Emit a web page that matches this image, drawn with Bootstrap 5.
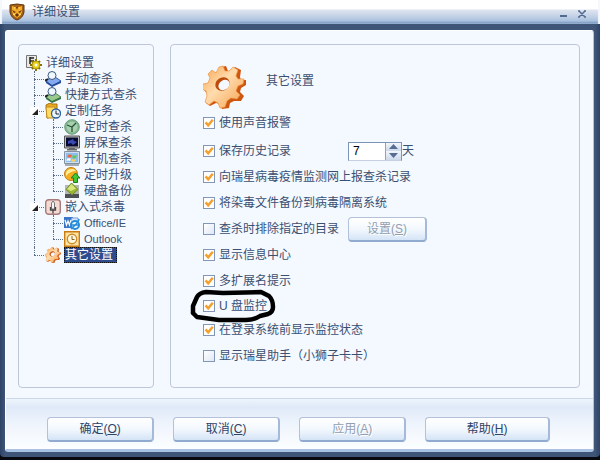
<!DOCTYPE html>
<html lang="zh-CN">
<head>
<meta charset="utf-8">
<meta name="viewport" content="width=device-width, initial-scale=1">
<title>详细设置</title>
<link href="https://cdn.jsdelivr.net/npm/bootstrap@5.3.0/dist/css/bootstrap.min.css" rel="stylesheet">
<style>
  body { font: 12px/16px "Liberation Sans", "Noto Sans CJK SC", sans-serif; color: #3b4f70; background: #08090f; }
  .app-window { height: calc(100vh - 3px); background: linear-gradient(90deg, #2d4468, #3f5577 5px, #3f5577 calc(100% - 5px), #2d4468); border-radius: 0 0 4px 4px; overflow: hidden; }
  .title-bar { height: 24px; margin-bottom: 6px; gap: 6px; padding: 0 14px 0 8px; background: linear-gradient(#fff 0 9px, #dde4ef 10px, #c9d6e8 15px, #a9c0de 21px, #7c98c3 23px); box-shadow: inset 2px 0 1px #f4f7fc, inset -2px 0 1px #f4f7fc; }
  .win-btns { gap: 11px; padding-top: 3px; }
  .win-btn { border: 0; background: none; padding: 0; line-height: 0; }
  .client-area { margin: 0 6px 5px 5px; background: #f4f8ff; border: 1px solid #fff; border-right-color: #a9c4e8; border-bottom: 3px solid #a9c1e2; border-radius: 3px; }
  .panes { padding: 13px 13px 10px 12px; gap: 16px; }
  .pane { border: 1px solid #bcc8da; border-radius: 4px; }
  .tree-pane { width: 136px; padding: 10px 0 0 7px; }
  .tree-pane ul { list-style: none; margin: 0; padding: 0 0 0 8px; }
  .tree-pane ul ul { margin-left: -11px; padding-left: 19px; }
  .tree-pane li li { position: relative; padding-left: 11px; }
  .tree-pane li li::before { content: ""; position: absolute; left: 0; top: 0; bottom: 0; border-left: 1px dotted #5b6d88; }
  .tree-pane li li:last-child::before { bottom: auto; height: 8px; }
  .tree-pane li li::after { content: ""; position: absolute; left: 0; top: 8px; width: 10px; border-top: 1px dotted #5b6d88; }
  .node { height: 16px; white-space: nowrap; }
  .node svg { width: 16px; height: 16px; flex: none; margin-right: 3px; }
  .node a { color: inherit; text-decoration: none; padding: 0 1px; line-height: 16px; height: 16px; }
  .node .chosen { background: #2d4b8d; color: #fff; outline: 1px dotted #111; outline-offset: -1px; padding-right: 4px; }
  .latin { font-size: 11px; }
  .twist { position: absolute; z-index: 1; left: -4px; top: 4px; width: 9px; height: 9px; border: 0; padding: 0; background: #fff; line-height: 0; }
  .twist svg { width: 6px; height: 6px; margin: 1px 2px; display: block; }
  .option-pane { padding: 20px 0 0 32px; }
  .heading { height: 45px; gap: 20px; }
  .heading h1 { font-size: 12px; font-weight: 400; line-height: 16px; margin: 8px 0 0; }
  .opt { height: 26px; }
  .opt-days { margin-top: 2px; }
  .opt-short { height: 23px; }
  .opt label { white-space: nowrap; }
  .opt .form-check-input { width: 12px; height: 12px; margin: 0 4px 0 0; flex: none; border: 1px solid #8296b8; border-radius: 0; background-color: #fff; background-image: linear-gradient(135deg, #fff, #dfe8f6); background-size: cover; }
  .opt .form-check-input:checked { background-color: #fff; border-color: #8296b8; background-size: 10px 10px; background-image: url("data:image/svg+xml,%3csvg xmlns='http://www.w3.org/2000/svg' viewBox='0 0 10 10'%3e%3cpath d='M1.6 4.4 4.2 7.3 8.8 1.8' fill='none' stroke='%23f2a02e' stroke-width='2.5'/%3e%3c/svg%3e"); }
  .days-box { width: 54px; height: 19px; border: 1px solid #7e94b6; border-bottom-color: #c5d0e0; background: #fff; }
  .days-box input { min-width: 0; width: 36px; border: 0; padding: 0 4px; font-size: 12px; color: #000; background: none; }
  .spin { border: 0; border-left: 1px solid #8fa2c0; width: 16px; height: 50%; padding: 0; line-height: 0; background: linear-gradient(#f2f6fc, #ccd8ea); }
  .btn-app { height: 25px; padding: 0; font-size: 12px; line-height: 16px; color: #2f4364; border: 1px solid #b3c2d8; border-right: 2px solid #a4bad8; border-bottom: 2px solid #90abcf; border-radius: 4px; background: linear-gradient(#fff, #f3f8fe 50%, #d5e4f6); }
  .btn-app:disabled { color: #929fb2; opacity: 1; border-color: #b3c2d8 #a4bad8 #90abcf #b3c2d8; background: linear-gradient(#fff, #f3f8fe 50%, #d5e4f6); text-shadow: 1px 1px #fff; }
  .col-directory { width: 145px; }
  .btn-path { width: 79px; }
  .footer-bar { padding: 18px 43px 7px 41px; gap: 19px; border-top: 1px solid #ccd9eb; background: linear-gradient(#eef4fc, #dfe9f8 8px, #eef4fc 24px, #fbfdff 48px); }
  .footer-bar .btn-app { flex: 107 1 0; }
  .footer-bar .btn-wide { flex-grow: 125; }
  .ring { position: absolute; left: -14px; top: -6px; width: 88px; height: 36px; pointer-events: none; }
</style>
<script src="https://cdn.jsdelivr.net/npm/bootstrap@5.3.0/dist/js/bootstrap.bundle.min.js"></script>
</head>
<body>
<div class="app-window d-flex flex-column">
  <header class="title-bar d-flex align-items-center flex-shrink-0">
    <svg width="18" height="18" viewBox="0 0 18 18"><path d="M2 2q7-2 14 0v7q-1 6-7 8-6-2-7-8z" fill="#a85f13" stroke="#5d3a16"/><path d="M4 3l3 1h4l3-1v6l-2 4-3 2-3-2-2-4z" fill="#f4ad27"/><path d="M4 7l4 2-2 1zM14 7l-4 2 2 1zM7 12l2-2 2 2-2 2zM8 4h2l-1 3z" fill="#653112"/><path d="M6 5h1M11 5h1M5 11l2 1M13 11l-2 1" stroke="#fff08a"/></svg>
    <span>详细设置</span>
    <div class="win-btns d-flex align-items-end ms-auto">
      <button class="win-btn" aria-label="最小化"><svg width="7" height="8"><path d="M0 5h7v2H0z" fill="#536b91"/></svg></button>
      <button class="win-btn" aria-label="关闭"><svg width="8" height="8" viewBox="0 0 8 8"><path d="M1 1l6 6M7 1L1 7M0 1h2M6 1h2M0 7h2M6 7h2" fill="none" stroke="#536b91" stroke-width="1.5"/></svg></button>
    </div>
  </header>

  <main class="client-area d-flex flex-column flex-grow-1">
    <div class="panes d-flex flex-grow-1">
      <nav class="pane tree-pane flex-shrink-0" aria-label="设置分类">
        <ul class="p-0">
          <li>
            <div class="node d-flex"><svg viewBox="0 0 16 16"><path d="M.5.5h10v12H.5z" fill="#e8e8e4" stroke="#777"/><path d="M4 2v7M4 3h4M4 6h4" stroke="#222" stroke-width="1.5"/><path d="M10 4v12M4 10h12M6 6l8 8M14 6l-8 8" stroke="#8a7200" stroke-width="2"/><circle cx="10" cy="10" r="4" fill="#e4d11b" stroke="#8a7200" stroke-width=".6"/><circle cx="10" cy="10" r="1.5" fill="#fff"/></svg><a href="#">详细设置</a></div>
            <ul>
              <li><div class="node d-flex"><svg viewBox="0 0 16 16"><path d="M0 9l10-3 6 4-9 5z" fill="#85aaf0" stroke="#3159ae"/><path d="M1 10l6 4 9-4v2l-9 4-6-4z" fill="#254c9b"/><path d="M3 8l-3 2" stroke="#222" stroke-width="2"/><circle cx="7" cy="4.5" r="4" fill="#eef7ff" stroke="#3b5878"/></svg><a href="#">手动查杀</a></div></li>
              <li><div class="node d-flex"><svg viewBox="0 0 16 16"><path d="M0 9l10-3 6 4-9 5z" fill="#9bc98b" stroke="#4b8754"/><path d="M1 10l6 4 9-4v2l-9 4-6-4z" fill="#397545"/><path d="M3 8l-3 2" stroke="#222" stroke-width="2"/><circle cx="7" cy="4.5" r="4" fill="#eef7ff" stroke="#3b5878"/></svg><a href="#">快捷方式查杀</a></div></li>
              <li>
                <button class="twist" aria-label="折叠定制任务"><svg viewBox="0 0 5 5"><path d="M5 0v5H0z" fill="#222"/></svg></button>
                <div class="node d-flex"><svg viewBox="0 0 16 16"><path d="M1 2l4-2 2 1h5v12L2 15z" fill="#e9a81f" stroke="#a5700d"/><path d="M1 4h9v11H2z" fill="#ffdb66" stroke="#c18b20"/><circle cx="11" cy="10.5" r="4.5" fill="#eaf5ff" stroke="#2b62a1" stroke-width="1.3"/><path d="M11 7.500v3.500h3" fill="none" stroke="#222"/></svg><a href="#">定制任务</a></div>
                <ul>
                  <li><div class="node d-flex"><svg viewBox="0 0 16 16"><circle cx="8" cy="8" r="7.300" fill="#80b58e" stroke="#6d9f7c"/><circle cx="8" cy="8" r="5.500" fill="#a8d0ae"/><path d="M3 6l5 2 4-4M8 8v5" fill="none" stroke="#24543b" stroke-width="1.300"/></svg><a href="#">定时查杀</a></div></li>
                  <li><div class="node d-flex"><svg viewBox="0 0 16 16"><path d="M.5 1h15v12H.5z" fill="#bbb" stroke="#555"/><path d="M2 2.500h12v9H2z" fill="#080b32"/><path d="M4 6l3-1 2-1 1 2 3 1-4 3-2-2-3 1z" fill="#3c4bb4"/><path d="M5 13h6v1h2v1.500H3V14h2z" fill="#666"/></svg><a href="#">屏保查杀</a></div></li>
                  <li><div class="node d-flex"><svg viewBox="0 0 16 16"><path d="M.5.5h15v12H.5z" fill="#cde0f3" stroke="#82909f"/><path d="M2 2h12v9H2z" fill="#8fbdea"/><path d="M4 4q2-1 4 0L7 6.500Q5 6 3.500 6.500z" fill="#ef6540"/><path d="M9 4q2 1 4 0l-1 3q-2 1-4-.5z" fill="#69c457"/><path d="M3 7.500q2-.5 4 0L6 10q-2-1-3.500 0z" fill="#fff"/><path d="M8 8q2 1 4 0l-1 2.500q-2 .5-4-.5z" fill="#ffd35a"/><path d="M1 13h14v2H1z" fill="#a5aeb7"/></svg><a href="#">开机查杀</a></div></li>
                  <li><div class="node d-flex"><svg viewBox="0 0 16 16"><circle cx="7" cy="7" r="6.500" fill="#f5ae20" stroke="#c77b10"/><path d="M2 6q1-4 6-4 3 0 4 2-6 0-10 5z" fill="#fff0a0"/><path d="M11.500 6L16 11h-2.500v4.500h-4V11H7z" fill="#45c735" stroke="#167d1b"/></svg><a href="#">定时升级</a></div></li>
                  <li><div class="node d-flex"><svg viewBox="0 0 16 16"><path d="M1 2h14v13H1z" fill="#b4b8b7"/><path d="M1 11h14v4H1z" fill="#4d5157"/><path d="M7.500 0L14 6.500 8 12 2 6.500z" fill="#9ab532" stroke="#6f8c28"/><path d="M7.500 1L12 5.500 7 8 3 6z" fill="#d7e77c"/></svg><a href="#">硬盘备份</a></div></li>
                </ul>
              </li>
              <li>
                <button class="twist" aria-label="折叠嵌入式杀毒"><svg viewBox="0 0 5 5"><path d="M5 0v5H0z" fill="#222"/></svg></button>
                <div class="node d-flex"><svg viewBox="0 0 16 16"><rect x=".7" y=".7" width="14.600" height="14.600" rx="3" fill="#f5d9d3" stroke="#a67b79" stroke-width="1.400"/><path d="M8 2l1.500 2v6h-3V4z" fill="#f7f7f7" stroke="#777"/><path d="M5.500 8v3h5V8M8 11v3.500" fill="none" stroke="#444" stroke-width="1.300"/></svg><a href="#">嵌入式杀毒</a></div>
                <ul>
                  <li><div class="node d-flex"><svg viewBox="0 0 16 16"><path d="M0 2h9v11H0z" fill="#3c75c6"/><path d="M4 3h10v9H4z" fill="#d7e9fc" stroke="#719bcf"/><path d="M1.500 2v11h6V2z" fill="#3c75c6"/><path d="M1 5l1.500 5L4 6l1.500 4L7 5" fill="none" stroke="#fff" stroke-width="1.300"/><circle cx="11" cy="10" r="4" fill="#e9f8ff" stroke="#278bd8" stroke-width="2"/><path d="M8 10h6M7 14Q15 7 15 4" fill="none" stroke="#278bd8" stroke-width="1.500"/></svg><a class="latin" href="#">Office/IE</a></div></li>
                  <li><div class="node d-flex"><svg viewBox="0 0 16 16"><path d="M.7.7h14.600v14.600H.7z" fill="#ffe3a0" stroke="#c97b13" stroke-width="1.400"/><circle cx="8" cy="8" r="4.700" fill="#fff8df" stroke="#c98b2b" stroke-width="1.400"/><path d="M8 5v3.500h2.500" fill="none" stroke="#8d6120"/></svg><a class="latin" href="#">Outlook</a></div></li>
                </ul>
              </li>
              <li><div class="node d-flex"><svg viewBox="0 0 43 44"><use href="#cog"/></svg><a class="chosen" href="#" aria-current="page">其它设置</a></div></li>
            </ul>
          </li>
        </ul>
      </nav>

      <form class="pane option-pane flex-grow-1">
        <div class="heading d-flex align-items-start">
          <svg width="43" height="44" viewBox="0 0 43 44">
            <defs><linearGradient id="gold" x1="0" y1="0" x2="1" y2="1"><stop offset="0" stop-color="#f8a550"/><stop offset=".45" stop-color="#ffdcae"/><stop offset="1" stop-color="#f5a04c"/></linearGradient></defs>
            <g id="cog">
              <path id="cog-edge" d="M18 2l5-1 2 5h3l4-4 6 3-1 7 1 3 5 0v5l-5 3-1 4 4 4-3 5-7 0-4 2-1 5-7 1-2-5-4-1-6 3-4-3 3-6-2-4-3-3 1-5 5-1 3-5-3-4 4-3 4 2z" fill="#cf560f"/>
              <path d="M16 2l4-1 2 5h4l4-4 5 3-2 6 2 3 6 0-1 5-5 2-2 5 4 4-3 4-6-1-4 3-2 6-5 1-2-5-4-2-5 4-4-3 2-6-1-5-4-2 1-5 5-1 2-5-2-4 4-4 4 3z" fill="url(#gold)" stroke="#ee9440" stroke-width=".7"/>
              <ellipse cx="19.500" cy="19" rx="7.500" ry="6.500" transform="rotate(-35 19.500 19)" fill="#bd4b0b"/>
              <ellipse cx="21" cy="20" rx="6" ry="4.700" transform="rotate(-35 21 20)" fill="#f4f8ff"/>
            </g>
          </svg>
          <h1>其它设置</h1>
        </div>
        <div class="opt d-flex align-items-center"><input class="form-check-input" type="checkbox" id="c1" checked><label for="c1">使用声音报警</label></div>
        <div class="opt opt-days d-flex align-items-center">
          <div class="col-directory d-flex align-items-center flex-shrink-0"><input class="form-check-input" type="checkbox" id="c2" checked><label for="c2">保存历史记录</label></div>
          <div class="days-box d-flex flex-shrink-0"><input type="text" value="7" id="days" aria-label="保存天数">
            <div class="d-flex flex-column"><button type="button" class="spin" aria-label="增加"><svg width="9" height="5"><path d="M0 5l4.500-5L9 5z" fill="#556d93"/></svg></button><button type="button" class="spin" aria-label="减少"><svg width="9" height="5"><path d="M0 0l4.500 5L9 0z" fill="#556d93"/></svg></button></div>
          </div>
          <label for="days">天</label>
        </div>
        <div class="opt d-flex align-items-center"><input class="form-check-input" type="checkbox" id="c3" checked><label for="c3">向瑞星病毒疫情监测网上报查杀记录</label></div>
        <div class="opt d-flex align-items-center"><input class="form-check-input" type="checkbox" id="c4" checked><label for="c4">将染毒文件备份到病毒隔离系统</label></div>
        <div class="opt d-flex align-items-center">
          <div class="col-directory d-flex align-items-center flex-shrink-0"><input class="form-check-input" type="checkbox" id="c5"><label for="c5">查杀时排除指定的目录</label></div>
          <button type="button" class="btn btn-app btn-path" disabled>设置(<u>S</u>)</button>
        </div>
        <div class="opt d-flex align-items-center"><input class="form-check-input" type="checkbox" id="c6" checked><label for="c6">显示信息中心</label></div>
        <div class="opt d-flex align-items-center"><input class="form-check-input" type="checkbox" id="c7" checked><label for="c7">多扩展名提示</label></div>
        <div class="opt opt-short d-flex align-items-center position-relative"><input class="form-check-input" type="checkbox" id="c8" checked><label for="c8">U 盘监控</label>
          <svg class="ring" viewBox="0 0 88 36"><path d="M4 25V18L8 9Q10 5 17 4L34 5 72 4 80 8Q84 12 84 19 84 24 79 26L71 28Q65 32 57 32H30L8 29 4 25" fill="none" stroke="#000" stroke-width="4.500" stroke-linecap="round" stroke-linejoin="round"/></svg>
        </div>
        <div class="opt d-flex align-items-center"><input class="form-check-input" type="checkbox" id="c9" checked><label for="c9">在登录系统前显示监控状态</label></div>
        <div class="opt d-flex align-items-center"><input class="form-check-input" type="checkbox" id="c10"><label for="c10">显示瑞星助手（小狮子卡卡）</label></div>
      </form>
    </div>
    <footer class="footer-bar d-flex align-items-center flex-shrink-0">
      <button type="button" class="btn btn-app">确定(<u>O</u>)</button>
      <button type="button" class="btn btn-app">取消(<u>C</u>)</button>
      <button type="button" class="btn btn-app" disabled>应用(<u>A</u>)</button>
      <button type="button" class="btn btn-app btn-wide">帮助(<u>H</u>)</button>
    </footer>
  </main>
</div>
</body>
</html>
